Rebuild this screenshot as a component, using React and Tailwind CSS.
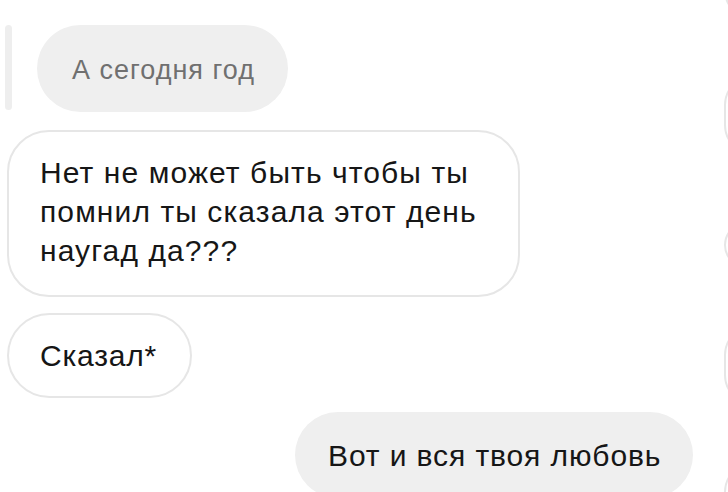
export default function App() {
  const font = { fontFamily: '"Liberation Sans", Arial, sans-serif' };
  return (
    <div
      className="relative w-[728px] h-[492px] overflow-hidden bg-white"
      style={font}
    >
      <div className="flex flex-col pt-[25px]">
        <div className="flex items-start">
          <div className="ml-[5px] w-[7px] h-[85px] rounded-full bg-[#eeeeee]" />
          <div className="ml-[25px] w-[251px] h-[87px] rounded-full bg-[#efefef] flex items-center pl-[35px] pt-[3px]">
            <span className="text-[27px] tracking-[1px] text-[#707070] whitespace-nowrap">А сегодня год</span>
          </div>
        </div>
        <div className="mt-[18px] ml-[7px] w-[513px] h-[167px] rounded-[42px] border-2 border-[#e6e6e6] bg-white pl-[31px] pt-[21px]">
          <div className="text-[30px] tracking-[1.1px] leading-[39px] text-[#161616] whitespace-nowrap">
            Нет не может быть чтобы ты
            <br />
            помнил ты сказала этот день
            <br />
            наугад да???
          </div>
        </div>
        <div className="mt-[16px] ml-[7px] w-[185px] h-[85px] rounded-full border-2 border-[#e6e6e6] bg-white flex items-center pl-[31px]">
          <span className="text-[30px] tracking-[0.8px] text-[#161616] whitespace-nowrap">Сказал*</span>
        </div>
        <div className="mt-[14px] ml-[295px] w-[398px] h-[86px] rounded-full bg-[#efefef] flex items-center pl-[33px]">
          <span className="text-[30px] tracking-[0.9px] text-[#161616] whitespace-nowrap">Вот и вся твоя любовь</span>
        </div>
      </div>
      <div className="absolute left-[724px] top-[-60px] w-[200px] h-[80px] rounded-[30px] border-2 border-[#e6e6e6]" />
      <div className="absolute left-[724px] top-[75px] w-[200px] h-[80px] rounded-[30px] border-2 border-[#e6e6e6]" />
      <div className="absolute left-[724px] top-[222px] w-[200px] h-[46px] rounded-full border-2 border-[#e6e6e6]" />
      <div className="absolute left-[724px] top-[325px] w-[200px] h-[80px] rounded-[30px] border-2 border-[#e6e6e6]" />
      <div className="absolute left-[724px] top-[462px] w-[200px] h-[80px] rounded-[30px] border-2 border-[#e6e6e6]" />
    </div>
  );
}
